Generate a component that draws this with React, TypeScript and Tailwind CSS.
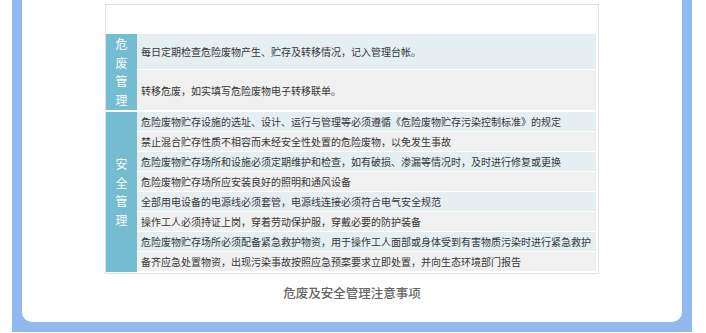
const topRows = [
  { text: "每日定期检查危险废物产生、贮存及转移情况，记入管理台帐。", h: "h-[36px]", bg: "bg-[#e5eff2]" },
  { text: "转移危废，如实填写危险废物电子转移联单。", h: "h-[40px]", bg: "bg-[#f0f0f0]" },
];

const safeRows = [
  "危险废物贮存设施的选址、设计、运行与管理等必须遵循《危险废物贮存污染控制标准》的规定",
  "禁止混合贮存性质不相容而未经安全性处置的危险废物，以免发生事故",
  "危险废物贮存场所和设施必须定期维护和检查，如有破损、渗漏等情况时，及时进行修复或更换",
  "危险废物贮存场所应安装良好的照明和通风设备",
  "全部用电设备的电源线必须套管，电源线连接必须符合电气安全规范",
  "操作工人必须持证上岗，穿着劳动保护服，穿戴必要的防护装备",
  "危险废物贮存场所必须配备紧急救护物资，用于操作工人面部或身体受到有害物质污染时进行紧急救护",
  "备齐应急处置物资，出现污染事故按照应急预案要求立即处置，并向生态环境部门报告",
];

function SideLabel({ chars }: { chars: string[] }) {
  return (
    <div className="w-[31px] shrink-0 bg-[#74bdd0] flex flex-col items-center justify-center text-white text-[12px] leading-[18.5px]">
      {chars.map((c, i) => (
        <span key={i}>{c}</span>
      ))}
    </div>
  );
}

export default function App() {
  return (
    <div
      className="w-[706px] h-[333px] bg-white pl-[12px] pr-[14px] pb-[1px] overflow-hidden"
      style={{ fontFamily: '"Noto Sans CJK SC", "Noto Sans", sans-serif' }}
    >
      <div className="h-full bg-[#91b9f0] px-[10px] pb-[10px]">
        <div className="h-full bg-white rounded-b-[10px] pt-[4px] flex flex-col items-center">
          <div className="w-[494px] h-[270px] border border-[#e2e2e2] pt-[29px] pl-0 pr-[2px] pb-[2px] flex flex-col">
            {/* 危废管理 */}
            <div className="flex border-b-2 border-white">
              <SideLabel chars={["危", "废", "管", "理"]} />
              <div className="flex-1 flex flex-col">
                {topRows.map((r, i) => (
                  <div
                    key={i}
                    className={`${r.h} ${r.bg} flex items-center pl-[4px] text-[10px] text-[#363636] whitespace-nowrap ${i === 0 ? "border-b border-white" : ""}`}
                  >
                    {r.text}
                  </div>
                ))}
              </div>
            </div>
            {/* 安全管理 */}
            <div className="flex flex-1">
              <SideLabel chars={["安", "全", "管", "理"]} />
              <div className="flex-1 flex flex-col">
                {safeRows.map((t, i) => (
                  <div
                    key={i}
                    className={`h-[20px] flex items-center pl-[4px] text-[10px] text-[#363636] whitespace-nowrap border-b border-white ${i % 2 === 0 ? "bg-[#e5eff2]" : "bg-[#f0f0f0]"}`}
                  >
                    {t}
                  </div>
                ))}
              </div>
            </div>
          </div>
          <div className="mt-[12px] text-[12.5px] font-medium text-[#666666] leading-[14px]">
            危废及安全管理注意事项
          </div>
        </div>
      </div>
    </div>
  );
}
